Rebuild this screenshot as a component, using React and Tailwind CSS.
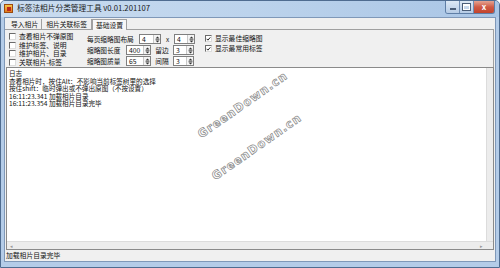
import React from "react";

const F = "font-['Noto_Sans_CJK_SC','Noto_Sans_CJK_JP',sans-serif]";

function Check({ checked }) {
  return (
    <span className="w-[7px] h-[7px] bg-white border border-t-[#6b6b6b] border-l-[#6b6b6b] border-r-[#dcdcdc] border-b-[#dcdcdc] flex items-center justify-center shrink-0">
      {checked && (
        <svg width="6" height="6" viewBox="0 0 6 6">
          <path d="M0.8 2.8 L2.3 4.4 L5.2 1" stroke="#222" strokeWidth="1.2" fill="none" />
        </svg>
      )}
    </span>
  );
}

function Spin({ value, w }) {
  return (
    <div className={`h-[10px] ${w} bg-white border border-[#7f7f7f] flex items-center`}>
      <span className="flex-1 pl-[2px] text-[6.8px] leading-[8px] text-[#111]">{value}</span>
      <span className="w-[7px] h-full border-l border-[#c8c8c8] bg-[#f4f4f4] flex items-center justify-center">
        <svg width="5" height="7" viewBox="0 0 5 7">
          <path d="M2.5 0.5 L4.5 2.5 L0.5 2.5 Z" fill="#333" />
          <path d="M0.5 3.5 L4.5 3.5" stroke="#333" strokeWidth="0.6" />
          <path d="M2.5 6.5 L4.5 4.5 L0.5 4.5 Z" fill="#333" />
        </svg>
      </span>
    </div>
  );
}

export default function App() {
  return (
    <div className={`w-[500px] h-[268px] overflow-hidden bg-[#b4cce8] border border-[#4f6c90] rounded-t-[5px] flex flex-col ${F} text-[#111]`}>
      {/* title bar */}
      <div className="h-[16px] shrink-0 flex items-start pl-[3px] pr-[4px] bg-gradient-to-r from-[#cadcf0] via-[#bcd3ec] to-[#a9c5e5]">
        <div className="mt-[3px] w-[9px] h-[9px] bg-gradient-to-b from-[#f7c64a] to-[#e07a1c] border border-[#9b4a10] flex items-center justify-center">
          <div className="w-[4px] h-[4px] bg-[#c0281c]" />
        </div>
        <span className="ml-[4px] mt-[2px] text-[7.7px] leading-[10px] text-[#1a1a1a]">标签法相片分类管理工具 v0.01.201107</span>
        <div className="flex-1" />
        <div className="flex h-[13px] rounded-b-[3px] overflow-hidden border border-t-0 border-[#5e7ea6]">
          <div className="w-[14px] bg-gradient-to-b from-[#dce8f5] to-[#b5cbe5] border-r border-[#6f8db3] flex items-center justify-center">
            <div className="w-[6px] h-[2px] bg-white border border-[#4a5d78] mt-[4px]" />
          </div>
          <div className="w-[14px] bg-gradient-to-b from-[#dce8f5] to-[#b5cbe5] border-r border-[#6f8db3] flex items-center justify-center">
            <div className="w-[7px] h-[6px] border-[1.5px] border-t-[2px] border-white outline outline-1 outline-[#4a5d78]" />
          </div>
          <div className="w-[20px] bg-gradient-to-b from-[#e3a392] via-[#cf5a45] to-[#c2432c] flex items-center justify-center text-white text-[8px] font-bold leading-none">
            x
          </div>
        </div>
      </div>

      {/* client */}
      <div className="flex-1 mx-[3px] mb-[5px] bg-[#f0f0f0] border border-[#7f98b8] flex flex-col">
        {/* tab strip */}
        <div className="h-[11px] shrink-0 flex items-end pl-[3px]">
          <div className="h-[10px] px-[3px] flex items-center text-[6.8px] leading-none border-r border-[#a0a0a0]">导入相片</div>
          <div className="h-[10px] px-[4px] flex items-center text-[6.8px] leading-none border-r border-[#a0a0a0]">相片关联标签</div>
          <div className="h-[11px] px-[3px] flex items-center text-[6.8px] leading-none bg-[#f7f7f7] border-x border-t border-[#a0a0a0] -mb-[1px] relative z-10">基础设置</div>
        </div>
        {/* tab page */}
        <div className="h-[38px] shrink-0 border-t border-r border-[#a0a0a0] mr-[1px] flex pt-[3px] pl-[4px]">
          <div className="w-[78px] flex flex-col gap-[1.5px]">
            {["查看相片不弹原图", "维护标签、说明", "维护相片、目录", "关联相片-标签"].map((t) => (
              <div key={t} className="h-[7px] flex items-center gap-[3px] text-[6.8px] leading-none">
                <Check />
                <span>{t}</span>
              </div>
            ))}
          </div>
          <div className="w-[115px] flex flex-col gap-[1px] pt-[1px]">
            <div className="h-[10px] flex items-center">
              <span className="w-[52px] text-[6.7px] leading-none">每页缩略图布局</span>
              <Spin value="4" w="w-[22px]" />
              <span className="w-[13px] text-center text-[6.5px] leading-none">x</span>
              <Spin value="4" w="w-[21px]" />
            </div>
            <div className="h-[10px] flex items-center">
              <span className="w-[39px] text-[6.7px] leading-none">缩略图长度</span>
              <Spin value="400" w="w-[25px]" />
              <span className="w-[22px] text-center text-[6.7px] leading-none">留边</span>
              <Spin value="3" w="w-[21px]" />
            </div>
            <div className="h-[10px] flex items-center">
              <span className="w-[39px] text-[6.7px] leading-none">缩略图质量</span>
              <Spin value="65" w="w-[25px]" />
              <span className="w-[22px] text-center text-[6.7px] leading-none">间隔</span>
              <Spin value="3" w="w-[21px]" />
            </div>
          </div>
          <div className="ml-[3px] flex flex-col gap-[3px] pt-[2px]">
            {["显示最佳缩略图", "显示最常用标签"].map((t) => (
              <div key={t} className="h-[7px] flex items-center gap-[3px] text-[6.8px] leading-none">
                <Check checked />
                <span>{t}</span>
              </div>
            ))}
          </div>
        </div>

        {/* log box */}
        <div className="flex-1 mx-[1px] bg-white border border-[#8a8a8a] flex flex-col relative overflow-hidden">
          <div className="flex-1 flex">
            <div className="flex-1 pl-[2px] pt-[2px] text-[6.6px] leading-[7.5px] whitespace-pre">
              <div>日志</div>
              <div>查看相片时，按住Alt：不影响当前标签树里的选择</div>
              <div>按住shift：临时弹出或不弹出原图（不按设置）</div>
              <div>16:11:23.341 加载相片目录</div>
              <div>16:11:23.354 加载相片目录完毕</div>
            </div>
            <div className="w-[7px] bg-[#ececec] border-l border-[#dcdcdc]" />
          </div>
          <div className="h-[8px] shrink-0 flex bg-[#ececec] border-t border-[#dcdcdc]">
            <div className="flex-1 flex items-center justify-between px-[3px] text-[5px] text-[#999] leading-none">
              <span>◂</span>
              <span>▸</span>
            </div>
            <div className="w-[7px]" />
          </div>
          {/* watermark */}
          <div className="absolute left-[196px] top-[59px] -rotate-[35deg] origin-bottom-left text-[11.5px] leading-[14px] font-bold tracking-[1px] text-white [-webkit-text-stroke:0.7px_#8a8a8a] font-['DejaVu_Sans',sans-serif]">
            GreenDown.cn
          </div>
          <div className="absolute left-[210px] top-[101px] -rotate-[35deg] origin-bottom-left text-[11.5px] leading-[14px] font-bold tracking-[1px] text-white [-webkit-text-stroke:0.7px_#8a8a8a] font-['DejaVu_Sans',sans-serif]">
            GreenDown.cn
          </div>
        </div>

        {/* status bar */}
        <div className="h-[11px] shrink-0 flex items-center pl-[1px] text-[6.8px] leading-none">加载相片目录完毕</div>
      </div>
    </div>
  );
}
